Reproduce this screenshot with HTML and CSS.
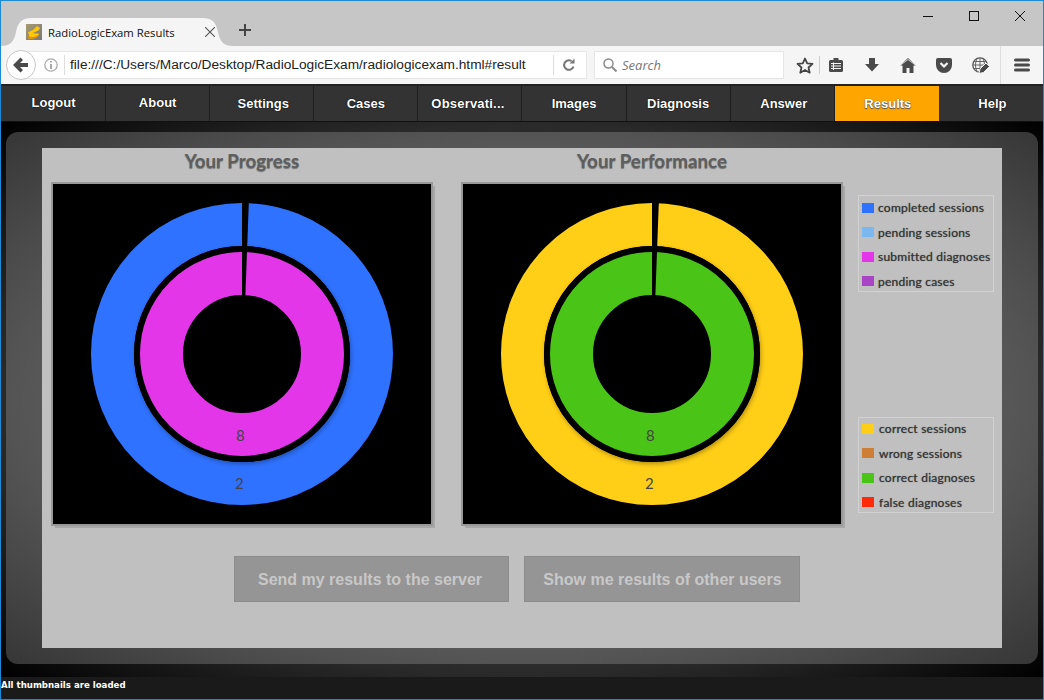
FILE: index.html
```html
<!DOCTYPE html>
<html lang="en">
<head>
<meta charset="utf-8">
<title>RadioLogicExam Results</title>
<link rel="stylesheet" href="styles.css">
</head>
<body>
<div class="window">
  <header class="tabstrip">
    <div class="tab">
      <svg class="tab-shape" width="232" height="28" viewBox="0 0 232 28"><path d="M0 28C9 28 13 24 15 14C17 4 21 0 31 0H201C211 0 215 4 217 14C219 24 223 28 232 28Z" fill="#f5f5f5"/></svg>
      <svg class="favicon" width="16" height="16" viewBox="0 0 16 16"><defs><linearGradient id="fg" x1="0" y1="0" x2="1" y2="1"><stop offset="0" stop-color="#a89a70"/><stop offset="1" stop-color="#777"/></linearGradient></defs><rect width="16" height="16" fill="url(#fg)"/><path d="M2 9C4 6 7 7 8 5L11 2L14 4C13 7 9 8 7 9C9 10 12 9 13 10C11 15 5 15 2 14C4 12 3 10 2 9Z" fill="#ffc800"/><path d="M2 12C5 14 9 13 12 11C10 15 5 15 2 14Z" fill="#f08a00"/></svg>
      <span class="tab-title">RadioLogicExam Results</span>
      <svg class="tab-close" width="10" height="10" viewBox="0 0 10 10"><path d="M0 0L10 10M10 0L0 10" stroke="#555" stroke-width="1.1"/></svg>
    </div>
    <svg class="new-tab" width="12" height="12" viewBox="0 0 12 12"><path d="M6 0V12M0 6H12" stroke="#444" stroke-width="2"/></svg>
    <div class="window-controls">
      <svg width="10" height="10" viewBox="0 0 10 10"><path d="M0 5.5H10" stroke="#111" stroke-width="1"/></svg>
      <svg width="10" height="10" viewBox="0 0 10 10"><rect x=".5" y=".5" width="9" height="9" fill="none" stroke="#111"/></svg>
      <svg width="10" height="10" viewBox="0 0 10 10"><path d="M0 0L10 10M10 0L0 10" stroke="#111" stroke-width="1"/></svg>
    </div>
  </header>

  <div class="toolbar">
    <div class="back">
      <svg width="18" height="16" viewBox="0 0 18 16"><path d="M1 8L8.5 0.5L11 3L8 6H16V10H8L11 13L8.5 15.5Z" fill="#4a4a4a"/></svg>
    </div>
    <div class="urlbar">
      <svg class="info" width="14" height="14" viewBox="0 0 14 14"><circle cx="7" cy="7" r="6.2" fill="none" stroke="#aaa" stroke-width="1.3"/><path d="M7 6V11M7 3V4.6" stroke="#999" stroke-width="1.7"/></svg>
      <span class="url">file:///C:/Users/Marco/Desktop/RadioLogicExam/radiologicexam.html#result</span>
      <span class="reload-box">
        <svg width="14" height="14" viewBox="0 0 14 14"><path d="M11.5 8.5A4.8 4.8 0 1 1 9.5 3" fill="none" stroke="#777" stroke-width="2"/><path d="M7.5 5.5H12.5V.5Z" fill="#777"/></svg>
      </span>
    </div>
    <div class="searchbar">
      <svg width="14" height="14" viewBox="0 0 14 14"><circle cx="5.5" cy="5.5" r="4.5" fill="none" stroke="#8a8a8a" stroke-width="1.5"/><path d="M9 9L13.5 13.5" stroke="#8a8a8a" stroke-width="2"/></svg>
      <span>Search</span>
    </div>
    <div class="tool tool-star"><svg width="18" height="17" viewBox="0 0 18 17"><path d="M9 1.5L11.2 6.3L16.5 6.9L12.5 10.5L13.7 15.7L9 13L4.3 15.7L5.5 10.5L1.5 6.9L6.8 6.3Z" fill="none" stroke="#444" stroke-width="1.8" stroke-linejoin="round"/></svg></div>
    <div class="tool tool-reader"><svg width="16" height="16" viewBox="0 0 16 16"><path d="M2.5 3H5.5V1H10.5V3H13.5A1.5 1.5 0 0 1 15 4.5V13.5A1.5 1.5 0 0 1 13.5 15H2.5A1.5 1.5 0 0 1 1 13.5V4.5A1.5 1.5 0 0 1 2.5 3Z" fill="#4a4a4a"/><path d="M3 6.5H13M3 9H13M3 11.5H13M5.5 5.5V13" stroke="#f5f5f5" stroke-width="1"/></svg></div>
    <div class="tool"><svg width="16" height="16" viewBox="0 0 16 16"><path d="M5 1H11V7H15L8 14.5L1 7H5Z" fill="#4a4a4a"/></svg></div>
    <div class="tool"><svg width="16" height="15" viewBox="0 0 16 15"><path d="M8 0L16 7.5H13.5V15H9.5V10H6.5V15H2.5V7.5H0Z" fill="#4a4a4a"/><path d="M0 7.5L8 1.5L16 7.5" fill="none" stroke="#f5f5f5" stroke-width=".8"/></svg></div>
    <div class="tool"><svg width="16" height="15" viewBox="0 0 16 15"><path d="M2 0H14A2 2 0 0 1 16 2V7A8 8 0 0 1 0 7V2A2 2 0 0 1 2 0Z" fill="#4a4a4a"/><path d="M4.5 5L8 8.5L11.5 5" fill="none" stroke="#f5f5f5" stroke-width="2.2"/></svg></div>
    <div class="tool"><svg width="17" height="17" viewBox="0 0 17 17"><circle cx="8" cy="8" r="7.2" fill="none" stroke="#555" stroke-width="1.3"/><path d="M1 8H15M2 4.5H14M2 11.5H14M8 1V15M4.8 2C3 6 3 10 4.8 14M11.2 2C13 6 13 10 11.2 14" fill="none" stroke="#666" stroke-width="1"/><path d="M7 16.5L8 12L14 6L17.5 9.5L11.5 15.5Z" fill="#4a4a4a" stroke="#f5f5f5" stroke-width="1"/></svg></div>
    <div class="tool tool-menu"><svg width="16" height="14" viewBox="0 0 16 14"><path d="M1.5 2H14.5M1.5 7H14.5M1.5 12H14.5" stroke="#4a4a4a" stroke-width="3" stroke-linecap="round"/></svg></div>
  </div>

  <nav class="menu">
    <a class="menu-item menu-item-high">Logout</a>
    <a class="menu-item menu-item-high">About</a>
    <a class="menu-item menu-item-nudge">Settings</a>
    <a class="menu-item">Cases</a>
    <a class="menu-item menu-item-observe">Observati...</a>
    <a class="menu-item">Images</a>
    <a class="menu-item">Diagnosis</a>
    <a class="menu-item menu-item-nudge">Answer</a>
    <a class="menu-item menu-item-active menu-item-nudge">Results</a>
    <a class="menu-item menu-item-last menu-item-nudge">Help</a>
  </nav>

  <main class="stage">
    <div class="frame">
      <div class="sheet">
        <div class="charts">
          <section class="chart">
            <h2 class="chart-title">Your Progress</h2>
            <svg class="chart-canvas" width="378" height="340" viewBox="0 0 378 340">
              <circle class="ring" cx="189" cy="170" r="129.5" stroke="#2f72ff"/>
              <circle class="ring-gap" cx="189" cy="170" r="108"/>
              <circle class="ring" cx="189" cy="170" r="80.5" stroke="#e236e8"/>
              <polygon points="189,170 189,0 196.5,0 190.2,170" fill="#000"/>
              <text class="chart-value" x="183" y="256.5">8</text>
              <text class="chart-value" x="182" y="305">2</text>
            </svg>
          </section>
          <section class="chart">
            <h2 class="chart-title">Your Performance</h2>
            <svg class="chart-canvas" width="378" height="340" viewBox="0 0 378 340">
              <circle class="ring" cx="189" cy="170" r="129.5" stroke="#ffce16"/>
              <circle class="ring-gap" cx="189" cy="170" r="108"/>
              <circle class="ring" cx="189" cy="170" r="80.5" stroke="#4ac416"/>
              <polygon points="189,170 189,0 196.5,0 190.2,170" fill="#000"/>
              <text class="chart-value" x="183" y="256.5">8</text>
              <text class="chart-value" x="182" y="305">2</text>
            </svg>
          </section>
          <aside class="legends">
            <ul class="legend">
              <li class="legend-row"><i class="swatch swatch-blue"></i>completed sessions</li>
              <li class="legend-row"><i class="swatch swatch-sky"></i>pending sessions</li>
              <li class="legend-row"><i class="swatch swatch-magenta"></i>submitted diagnoses</li>
              <li class="legend-row"><i class="swatch swatch-purple"></i>pending cases</li>
            </ul>
            <ul class="legend legend-lower">
              <li class="legend-row"><i class="swatch swatch-yellow"></i>correct sessions</li>
              <li class="legend-row"><i class="swatch swatch-brown"></i>wrong sessions</li>
              <li class="legend-row"><i class="swatch swatch-green"></i>correct diagnoses</li>
              <li class="legend-row"><i class="swatch swatch-red"></i>false diagnoses</li>
            </ul>
          </aside>
        </div>
        <div class="actions">
          <button class="action action-send">Send my results to the server</button>
          <button class="action action-show">Show me results of other users</button>
        </div>
      </div>
    </div>
  </main>

  <footer class="status">All thumbnails are loaded</footer>
</div>
</body>
</html>
```
FILE: styles.css
```css
* { box-sizing: border-box; }
html, body { margin: 0; padding: 0; height: 100%; overflow: hidden; }
.window {
  width: 1044px; height: 700px;
  display: flex; flex-direction: column;
  border: 1px solid #1b8ad8;
  background: #c6c6c6;
  font-family: "Liberation Sans", Arial, sans-serif;
}

/* tab strip */
.tabstrip { height: 45px; flex: none; display: flex; align-items: flex-end; position: relative; }
.tab { position: relative; width: 232px; height: 28px; display: flex; align-items: center; flex: none; }
.tab-shape { position: absolute; left: 0; top: 0; }
.favicon { position: relative; margin-left: 25px; flex: none; }
.tab-title { position: relative; margin-left: 6px; font: 11.3px "Open Sans", "Noto Sans", sans-serif; color: #111; width: 157px; white-space: nowrap; }
.tab-close { position: relative; flex: none; }
.new-tab { margin: 0 0 10px 6px; flex: none; }
.window-controls { margin-left: auto; align-self: flex-start; display: flex; gap: 36px; padding: 10px 18px 0 0; }
.window-controls svg { display: block; }

/* toolbar */
.toolbar { height: 39px; flex: none; background: #f5f5f5; display: flex; align-items: center; padding-left: 5px; border-bottom: 1px solid #222; }
.back { width: 30px; height: 30px; border-radius: 50%; background: #fff; border: 1px solid #c8c8c8; display: flex; align-items: center; justify-content: center; position: relative; z-index: 1; flex: none; }
.urlbar { height: 28px; width: 566px; margin-left: -15px; background: #fff; border: 1px solid #e6e6e6; display: flex; align-items: center; padding-left: 22px; flex: none; }
.info { flex: none; }
.url { margin-left: 6px; padding-left: 5px; border-left: 1px solid #ddd; width: 489px; font: 13.7px/20px "Liberation Sans", Arial, sans-serif; color: #222; white-space: nowrap; overflow: hidden; }
.reload-box { height: 20px; flex: none; border-left: 1px solid #ddd; padding: 3px 0 0 8px; }
.reload-box svg { display: block; }
.searchbar { margin-left: 7px; height: 28px; width: 190px; background: #fff; border: 1px solid #e6e6e6; display: flex; align-items: center; padding-left: 8px; gap: 5px; font: italic 13px "Open Sans", "Noto Sans", sans-serif; color: #777; flex: none; }
.tool { width: 36px; height: 24px; display: flex; align-items: center; justify-content: center; flex: none; }
.tool-star { width: 28px; margin-left: 7px; }
.tool-reader { width: 33px; border-left: 1px solid #ccc; margin-right: 2px; height: 18px; }
.tool-menu { width: 42px; height: 38px; margin-left: 2px; border-left: 1px solid #ddd; }

/* menu */
.menu { height: 37px; flex: none; display: grid; grid-template-columns: repeat(10, 1fr); background: #333; border-top: 1px solid #222; border-bottom: 1px solid #111; padding-left: 1px; }
.menu-item { display: flex; align-items: center; justify-content: center; color: #fff; font: bold 13px "Liberation Sans", Arial, sans-serif; border-right: 1px solid #1e1e1e; text-shadow: 0 0 1px #000, 0 0 1px #000; white-space: nowrap; }
.menu-item-high { padding-bottom: 2px; }
.menu-item-nudge { padding-left: 3px; }
.menu-item-observe { padding-right: 4px; letter-spacing: .2px; }
.menu-item-active { background: #ffa500; border-right-color: #ffa500; text-shadow: 0 0 1px #444, 0 1px 1px #555; }
.menu-item-last { border-right: 0; }

/* stage */
.stage { flex: 1; min-height: 0; padding: 10px 5px 13px; background: radial-gradient(ellipse at center, #555 0, #2a2a2a 70%, #000 100%); }
.frame { height: 100%; border-radius: 12px; padding: 16px 36px; background: radial-gradient(ellipse at center, #808080 0, #565656 68%, #363636 100%); }
.sheet { height: 100%; background: #c0c0c0; padding-left: 10px; }
.charts { display: flex; }
.chart { width: 380px; margin-right: 30px; flex: none; }
.chart-title { margin: 0; height: 35px; text-align: center; font: bold 18.8px/26px Lato, "Open Sans", sans-serif; color: #5e5e5e; text-shadow: 0 1px 1px #777; }
.chart-canvas { display: block; margin: 1px; background: #000; box-shadow: 0 0 0 2px #989898, 3px 3px 0 1px #a8a8a8; }
.ring { fill: none; stroke-width: 43; }
.ring-gap { fill: #000; filter: drop-shadow(1px 2px 2px rgba(0,0,0,.3)); }
.chart-value { font: 15px Lato, "Open Sans", sans-serif; fill: #444; }

.legends { display: flex; flex-direction: column; justify-content: space-between; margin-left: -14px; padding: 47px 0 12px; width: 136px; flex: none; }
.legend { list-style: none; margin: 0; padding: 4px 3px 2px; height: 97px; border: 1px solid #d2d2d2; display: flex; flex-direction: column; justify-content: space-between; }
.legend-lower { height: 96px; padding-top: 3px; }
.legend-lower .legend-row { gap: 5px; }
.legend-row { display: flex; align-items: center; gap: 4px; font: 12px/15px Lato, "Open Sans", sans-serif; color: #333; letter-spacing: .23px; text-shadow: 0 0 1px #555; white-space: nowrap; }
.swatch { display: block; width: 12px; height: 10px; flex: none; }
.swatch-blue { background: #2f72ff; }
.swatch-sky { background: #7bb8f0; }
.swatch-magenta { background: #e236e8; }
.swatch-purple { background: #a845c4; }
.swatch-yellow { background: #ffce16; }
.swatch-brown { background: #cc7f35; }
.swatch-green { background: #4ac416; }
.swatch-red { background: #ff2a0a; }

.actions { display: flex; gap: 15px; margin: 31px 0 0 182px; }
.action { height: 46px; background: #959595; border: 1px solid #8c8c8c; color: #c8c8c8; font: bold 16px "Liberation Sans", Arial, sans-serif; padding: 1px 0 0; }
.action-send { width: 275px; padding-right: 3px; }
.action-show { width: 276px; padding-left: 1px; }

.status { height: 22px; flex: none; background: #1a1a1a; color: #fff; font: bold 8.6px/16px "DejaVu Sans", Verdana, sans-serif; }
```
